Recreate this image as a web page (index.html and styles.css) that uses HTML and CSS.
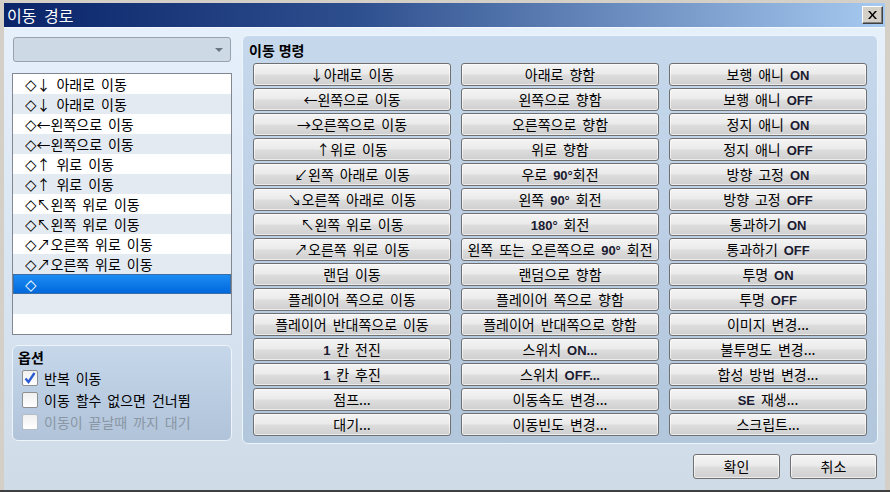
FILE: index.html
```html
<!DOCTYPE html>
<html lang="ko">
<head>
    <meta charset="UTF-8">
    <title>이동 경로</title>
    <link rel="stylesheet" href="styles.css">
</head>
<body>
    <div class="window">
        <div class="titlebar">
            <span class="title">이동 경로</span>
            <span class="close-btn">
                <svg width="9" height="8" viewBox="0 0 9 8"><path d="M0 0h2l2.5 3 2.5-3h2l-3.5 4 3.5 4h-2l-2.5-3-2.5 3h-2l3.5-4z" fill="#000"/></svg>
            </span>
        </div>

        <div class="client">
            <div class="main">
                <!-- 왼쪽: 대상 + 경로 목록 + 옵션 -->
                <div class="left-col">
                    <div class="combo"><span class="combo-arrow"></span></div>

                    <div class="route-list">
                        <div class="row"><span class="dia">◇</span>↓ 아래로 이동</div>
                        <div class="row"><span class="dia">◇</span>↓ 아래로 이동</div>
                        <div class="row"><span class="dia">◇</span>←왼쪽으로 이동</div>
                        <div class="row"><span class="dia">◇</span>←왼쪽으로 이동</div>
                        <div class="row"><span class="dia">◇</span>↑ 위로 이동</div>
                        <div class="row"><span class="dia">◇</span>↑ 위로 이동</div>
                        <div class="row"><span class="dia">◇</span>↖왼쪽 위로 이동</div>
                        <div class="row"><span class="dia">◇</span>↖왼쪽 위로 이동</div>
                        <div class="row"><span class="dia">◇</span>↗오른쪽 위로 이동</div>
                        <div class="row"><span class="dia">◇</span>↗오른쪽 위로 이동</div>
                        <div class="row selected"><span class="dia">◇</span></div>
                        <div class="row"></div>
                        <div class="row"></div>
                    </div>

                    <div class="options">
                        <div class="group-title">옵션</div>
                        <label class="check"><span class="box checked"><svg width="12" height="12" viewBox="0 0 12 12"><path d="M1.5 6.5l3 3.5 6-9" stroke="#2a5bd0" stroke-width="2.4" fill="none"/></svg></span>반복 이동</label>
                        <label class="check"><span class="box"></span>이동 할수 없으면 건너뜀</label>
                        <label class="check disabled"><span class="box"></span>이동이 끝날때 까지 대기</label>
                    </div>
                </div>

                <!-- 오른쪽: 이동 명령 -->
                <div class="commands">
                    <div class="group-title">이동 명령</div>
                    <div class="cmd-grid">
                        <div class="btn">↓아래로 이동</div>
                        <div class="btn">←왼쪽으로 이동</div>
                        <div class="btn">→오른쪽으로 이동</div>
                        <div class="btn">↑위로 이동</div>
                        <div class="btn">↙왼쪽 아래로 이동</div>
                        <div class="btn">↘오른쪽 아래로 이동</div>
                        <div class="btn">↖왼쪽 위로 이동</div>
                        <div class="btn">↗오른쪽 위로 이동</div>
                        <div class="btn">랜덤 이동</div>
                        <div class="btn">플레이어 쪽으로 이동</div>
                        <div class="btn">플레이어 반대쪽으로 이동</div>
                        <div class="btn"><span class="en">1</span> 칸 전진</div>
                        <div class="btn"><span class="en">1</span> 칸 후진</div>
                        <div class="btn">점프...</div>
                        <div class="btn">대기...</div>

                        <div class="btn">아래로 향함</div>
                        <div class="btn">왼쪽으로 향함</div>
                        <div class="btn">오른쪽으로 향함</div>
                        <div class="btn">위로 향함</div>
                        <div class="btn">우로 <span class="en">90°</span>회전</div>
                        <div class="btn">왼쪽 <span class="en">90°</span> 회전</div>
                        <div class="btn"><span class="en">180°</span> 회전</div>
                        <div class="btn">왼쪽 또는 오른쪽으로 <span class="en">90°</span> 회전</div>
                        <div class="btn">랜덤으로 향함</div>
                        <div class="btn">플레이어 쪽으로 향함</div>
                        <div class="btn">플레이어 반대쪽으로 향함</div>
                        <div class="btn">스위치 <span class="en">ON...</span></div>
                        <div class="btn">스위치 <span class="en">OFF...</span></div>
                        <div class="btn">이동속도 변경...</div>
                        <div class="btn">이동빈도 변경...</div>

                        <div class="btn">보행 애니 <span class="en">ON</span></div>
                        <div class="btn">보행 애니 <span class="en">OFF</span></div>
                        <div class="btn">정지 애니 <span class="en">ON</span></div>
                        <div class="btn">정지 애니 <span class="en">OFF</span></div>
                        <div class="btn">방향 고정 <span class="en">ON</span></div>
                        <div class="btn">방향 고정 <span class="en">OFF</span></div>
                        <div class="btn">통과하기 <span class="en">ON</span></div>
                        <div class="btn">통과하기 <span class="en">OFF</span></div>
                        <div class="btn">투명 <span class="en">ON</span></div>
                        <div class="btn">투명 <span class="en">OFF</span></div>
                        <div class="btn">이미지 변경...</div>
                        <div class="btn">불투명도 변경...</div>
                        <div class="btn">합성 방법 변경...</div>
                        <div class="btn"><span class="en">SE</span> 재생...</div>
                        <div class="btn">스크립트...</div>
                    </div>
                </div>
            </div>

            <div class="footer">
                <div class="btn dlg-btn">확인</div>
                <div class="btn dlg-btn">취소</div>
            </div>
        </div>
    </div>
</body>
</html>
```

FILE: styles.css
```css
* {
    box-sizing: border-box;
}

body {
    margin: 0;
    font-family: "Noto Sans CJK KR", "Noto Sans", sans-serif;
    font-size: 14px;
    word-spacing: 2px;
    color: #000;
}

.window {
    width: 890px;
    height: 492px;
    background-color: #d4d0c8;
    padding: 3px 5px 0 4px;
    border-bottom: 2px solid #404040;
    display: flex;
    flex-direction: column;
}

.titlebar {
    height: 24px;
    background: linear-gradient(to right, #0a246a 0%, #2e4f8e 40%, #a6caf0 100%);
    display: flex;
    align-items: center;
    justify-content: space-between;
    padding: 0 2px 0 3px;
}

.title {
    color: #fff;
    font-size: 16px;
    word-spacing: 3px;
}

.close-btn {
    width: 21px;
    height: 18px;
    background-color: #d4d0c8;
    border: 1px solid;
    border-color: #fff #404040 #404040 #fff;
    box-shadow: inset -1px -1px 0 #808080;
    display: flex;
    align-items: center;
    justify-content: center;
}

.client {
    flex: 1;
    background: linear-gradient(#e6f0fb 0%, #d9e5f2 50%, #cfdbe7 100%);
    border-top: 1px solid #f4f8fc;
    padding: 7px 7px 0 8px;
    display: flex;
    flex-direction: column;
}

.main {
    display: flex;
    gap: 10px;
    height: 409px;
}

.left-col {
    width: 220px;
    display: flex;
    flex-direction: column;
}

.combo {
    margin: 2px 1px 0 1px;
    height: 25px;
    background-color: #cdd9e5;
    border: 1px solid #98a2ac;
    border-radius: 3px;
    position: relative;
}

.combo-arrow {
    position: absolute;
    right: 7px;
    top: 10px;
    border-left: 4px solid transparent;
    border-right: 4px solid transparent;
    border-top: 4px solid #6c7680;
}

.route-list {
    margin-top: 11px;
    height: 262px;
    background-color: #fff;
    border: 1px solid #828790;
}

.row {
    height: 20px;
    line-height: 20px;
    padding-left: 12px;
    white-space: nowrap;
}

.row:nth-child(even) {
    background-color: #e4eaf1;
}

.row.selected {
    background: linear-gradient(#1c8cf4, #0068dc);
    border: 1px solid #3a6ea5;
    line-height: 18px;
    padding-left: 11px;
    color: #fff;
}

.dia {
    font-family: "DejaVu Sans", sans-serif;
    font-size: 15px;
}

.options {
    margin-top: 10px;
    height: 96px;
    border: 1px solid #eef4fb;
    border-radius: 6px;
    background: linear-gradient(#c6d7ea, #b0c3d9);
    padding: 2px 0 0 5px;
}

.group-title {
    font-weight: bold;
    font-size: 14px;
    line-height: 18px;
    word-spacing: 0;
}

.check {
    display: flex;
    align-items: center;
    height: 21px;
    padding-left: 4px;
    margin-top: 1px;
}

.check.disabled {
    color: #8a96a4;
}

.box {
    width: 16px;
    height: 16px;
    border: 1px solid #8e8f8f;
    border-radius: 2px;
    background: linear-gradient(#f0f0f0, #ffffff);
    margin-right: 6px;
    display: flex;
    align-items: center;
    justify-content: center;
}

.check.disabled .box {
    border-color: #b4bcc6;
}

.commands {
    flex: 1;
    border: 1px solid #eef4fb;
    border-radius: 6px;
    background: linear-gradient(#c6d8ec, #b2c6dc);
    padding: 5px 10px 0 10px;
}

.commands .group-title {
    margin-left: -4px;
    margin-bottom: 4px;
}

.cmd-grid {
    display: grid;
    grid-template-columns: repeat(3, 198px);
    grid-template-rows: repeat(15, 23px);
    grid-auto-flow: column;
    column-gap: 10px;
    row-gap: 2px;
}

.btn {
    border: 1px solid #707070;
    border-radius: 3px;
    background: linear-gradient(#f4f4f4 0%, #ebebeb 45%, #dcdcdc 55%, #cfcfcf 100%);
    box-shadow: inset 0 0 0 1px rgba(255, 255, 255, 0.6);
    text-align: center;
    line-height: 21px;
    white-space: nowrap;
    overflow: hidden;
}

.en {
    font-family: "Liberation Sans", Arial, sans-serif;
    font-weight: bold;
    font-size: 13px;
    color: #1a1a30;
}

.footer {
    margin-top: 10px;
    display: flex;
    justify-content: flex-end;
    gap: 10px;
    padding-right: 1px;
}

.dlg-btn {
    width: 87px;
    height: 25px;
    line-height: 23px;
}
```
